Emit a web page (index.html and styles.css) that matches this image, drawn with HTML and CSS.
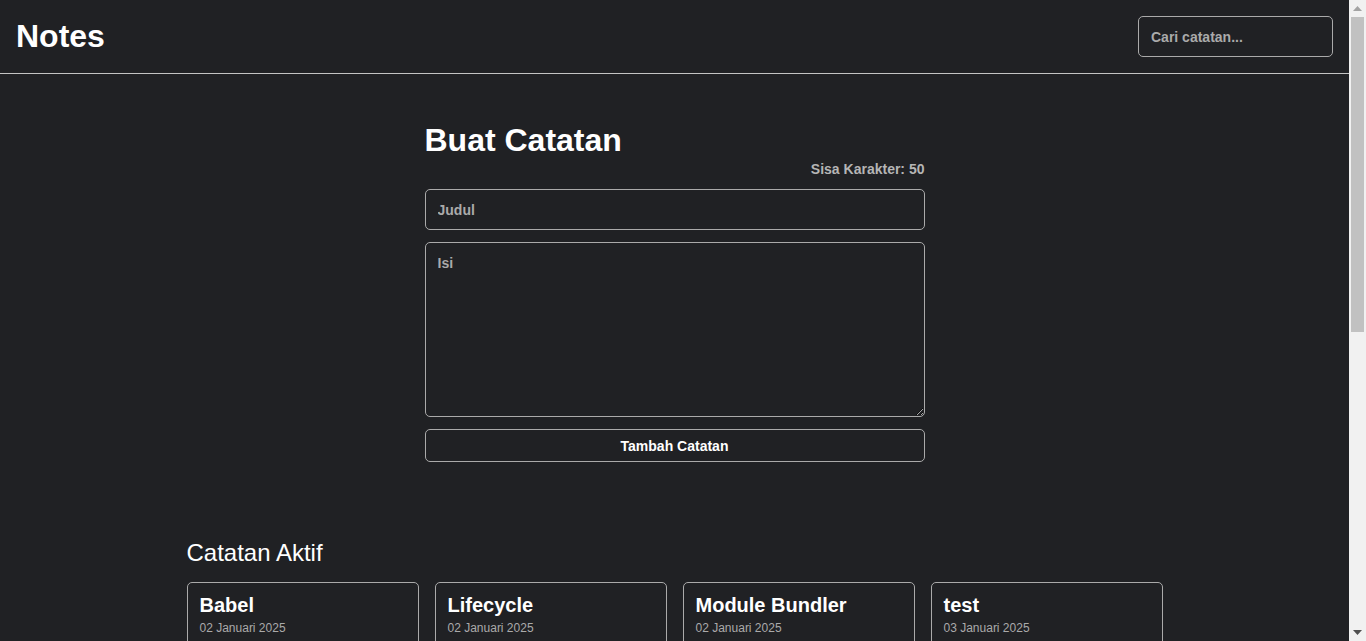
FILE: index.html
```html
<!DOCTYPE html>
<html lang="id">
<head>
<meta charset="utf-8">
<title>Notes</title>
<link rel="stylesheet" href="styles.css">
</head>
<body>
<header class="app-header">
  <h1 class="app-title">Notes</h1>
  <input class="search" type="text" placeholder="Cari catatan...">
</header>
<main class="app-body">
  <section class="note-input">
    <h2 class="note-input__title">Buat Catatan</h2>
    <p class="note-input__limit">Sisa Karakter: 50</p>
    <form class="note-input__form">
      <input class="field" type="text" placeholder="Judul">
      <textarea class="field field--body" placeholder="Isi"></textarea>
      <button class="submit" type="button">Tambah Catatan</button>
    </form>
  </section>

  <section class="notes">
    <h2 class="notes__heading">Catatan Aktif</h2>
    <div class="notes-list">
      <article class="note-item">
        <h3 class="note-item__title">Babel</h3>
        <p class="note-item__date">02 Januari 2025</p>
        <p class="note-item__body">Babel merupakan tools open-source yang digunakan untuk mengubah sintaks ECMAScript 2015+ menjadi sintaks yang didukung oleh JavaScript engine versi lama.</p>
        <div class="note-item__actions">
          <button class="btn btn--delete" type="button">Delete</button>
          <button class="btn btn--archive" type="button">Arsipkan</button>
        </div>
      </article>
      <article class="note-item">
        <h3 class="note-item__title">Lifecycle</h3>
        <p class="note-item__date">02 Januari 2025</p>
        <p class="note-item__body">Dalam konteks React component, lifecycle merupakan kumpulan method yang menjadi siklus hidup mulai dari component dibuat (constructor), dicetak (render), dan sebagainya.</p>
        <div class="note-item__actions">
          <button class="btn btn--delete" type="button">Delete</button>
          <button class="btn btn--archive" type="button">Arsipkan</button>
        </div>
      </article>
      <article class="note-item">
        <h3 class="note-item__title">Module Bundler</h3>
        <p class="note-item__date">02 Januari 2025</p>
        <p class="note-item__body">Dalam konteks pemrograman JavaScript, module bundler merupakan tools yang digunakan untuk menggabungkan seluruh modul JavaScript menjadi satu berkas.</p>
        <div class="note-item__actions">
          <button class="btn btn--delete" type="button">Delete</button>
          <button class="btn btn--archive" type="button">Arsipkan</button>
        </div>
      </article>
      <article class="note-item">
        <h3 class="note-item__title">test</h3>
        <p class="note-item__date">03 Januari 2025</p>
        <p class="note-item__body">test</p>
        <div class="note-item__actions">
          <button class="btn btn--delete" type="button">Delete</button>
          <button class="btn btn--archive" type="button">Arsipkan</button>
        </div>
      </article>
    </div>
  </section>

  <section class="notes">
    <h2 class="notes__heading">Arsip</h2>
    <p class="notes__empty">Tidak ada catatan</p>
  </section>
</main>

<div class="scrollbar" aria-hidden="true">
  <div class="scrollbar__btn">
    <svg width="9" height="5" viewBox="0 0 9 5"><polygon points="4.5,0 9,5 0,5" fill="#a3a3a3"/></svg>
  </div>
  <div class="scrollbar__track">
    <div class="scrollbar__thumb"></div>
  </div>
  <div class="scrollbar__btn">
    <svg width="9" height="5" viewBox="0 0 9 5"><polygon points="0,0 9,0 4.5,5" fill="#505050"/></svg>
  </div>
</div>
</body>
</html>
```
FILE: styles.css
```css
* {
  box-sizing: border-box;
}

html {
  background-color: #202124;
}

body {
  margin: 0 17px 0 0;
  background-color: #202124;
  color: #ffffff;
  font-family: "Liberation Sans", Arial, sans-serif;
}

.app-header {
  display: flex;
  justify-content: space-between;
  align-items: center;
  padding: 16px;
  border-bottom: 1px solid #c4c4c4;
}

.app-title {
  margin: 0;
  font-size: 32px;
  line-height: 37px;
  font-weight: 700;
  color: #ffffff;
}

.search {
  width: 195px;
  height: 41px;
  padding: 0 12px;
  background-color: transparent;
  border: 1px solid #aaaaaa;
  border-radius: 5px;
  color: #ffffff;
  font-family: "Liberation Sans", Arial, sans-serif;
  font-size: 14px;
  font-weight: 700;
  outline: none;
}

.search::placeholder,
.field::placeholder {
  color: #aaaaaa;
  opacity: 1;
}

.app-body {
  display: flex;
  flex-direction: column;
  align-items: center;
  padding: 48px 0 64px;
}

.note-input {
  width: 500px;
  display: flex;
  flex-direction: column;
}

.note-input__title {
  margin: 0;
  font-size: 32px;
  line-height: 37px;
  font-weight: 700;
}

.note-input__limit {
  margin: 2px 0 12px;
  text-align: right;
  font-size: 14px;
  line-height: 16px;
  font-weight: 700;
  color: #b5b5b5;
}

.note-input__form {
  display: flex;
  flex-direction: column;
  gap: 12px;
}

.field {
  width: 100%;
  height: 41px;
  padding: 12px;
  background-color: transparent;
  border: 1px solid #aaaaaa;
  border-radius: 5px;
  color: #ffffff;
  font-family: "Liberation Sans", Arial, sans-serif;
  font-size: 14px;
  font-weight: 700;
  outline: none;
}

.field--body {
  height: 175px;
  resize: vertical;
}

.submit {
  height: 33px;
  background-color: transparent;
  border: 1px solid #aaaaaa;
  border-radius: 5px;
  color: #ffffff;
  font-family: "Liberation Sans", Arial, sans-serif;
  font-size: 14px;
  font-weight: 700;
  cursor: pointer;
}

.notes {
  width: 976px;
  margin-top: 77px;
}

.notes + .notes {
  margin-top: 48px;
}

.notes__heading {
  margin: 0 0 15px;
  font-size: 24px;
  line-height: 28px;
  font-weight: 400;
}

.notes__empty {
  margin: 0;
  font-size: 14px;
  color: #aaaaaa;
}

.notes-list {
  display: grid;
  grid-template-columns: repeat(4, 1fr);
  gap: 16px;
}

.note-item {
  display: flex;
  flex-direction: column;
  border: 1px solid #aaaaaa;
  border-radius: 5px;
  overflow: hidden;
}

.note-item__title {
  margin: 0;
  padding: 11px 12px 0;
  font-size: 20px;
  line-height: 23px;
  font-weight: 700;
}

.note-item__date {
  margin: 4px 0 0;
  padding: 0 12px;
  font-size: 12px;
  line-height: 14px;
  color: #aaaaaa;
}

.note-item__body {
  flex: 1;
  margin: 12px 0;
  padding: 0 12px;
  font-size: 14px;
  line-height: 20px;
  color: #e0e0e0;
}

.note-item__actions {
  display: flex;
  border-top: 1px solid #aaaaaa;
}

.btn {
  flex: 1;
  padding: 10px 0;
  background: transparent;
  border: none;
  font-family: "Liberation Sans", Arial, sans-serif;
  font-size: 14px;
  font-weight: 700;
  cursor: pointer;
}

.btn--delete {
  color: #ff5f52;
  border-right: 1px solid #aaaaaa;
}

.btn--archive {
  color: #fdd835;
}

/* fake classic scrollbar overlaying the right edge */
.scrollbar {
  position: fixed;
  top: 0;
  right: 0;
  width: 17px;
  height: 100vh;
  display: flex;
  flex-direction: column;
  background-color: #f1f1f1;
}

.scrollbar__btn {
  height: 17px;
  display: flex;
  align-items: center;
  justify-content: center;
  flex-shrink: 0;
}

.scrollbar__track {
  flex: 1;
  padding: 0 2px;
}

.scrollbar__thumb {
  height: 315px;
  background-color: #c1c1c1;
}
```
